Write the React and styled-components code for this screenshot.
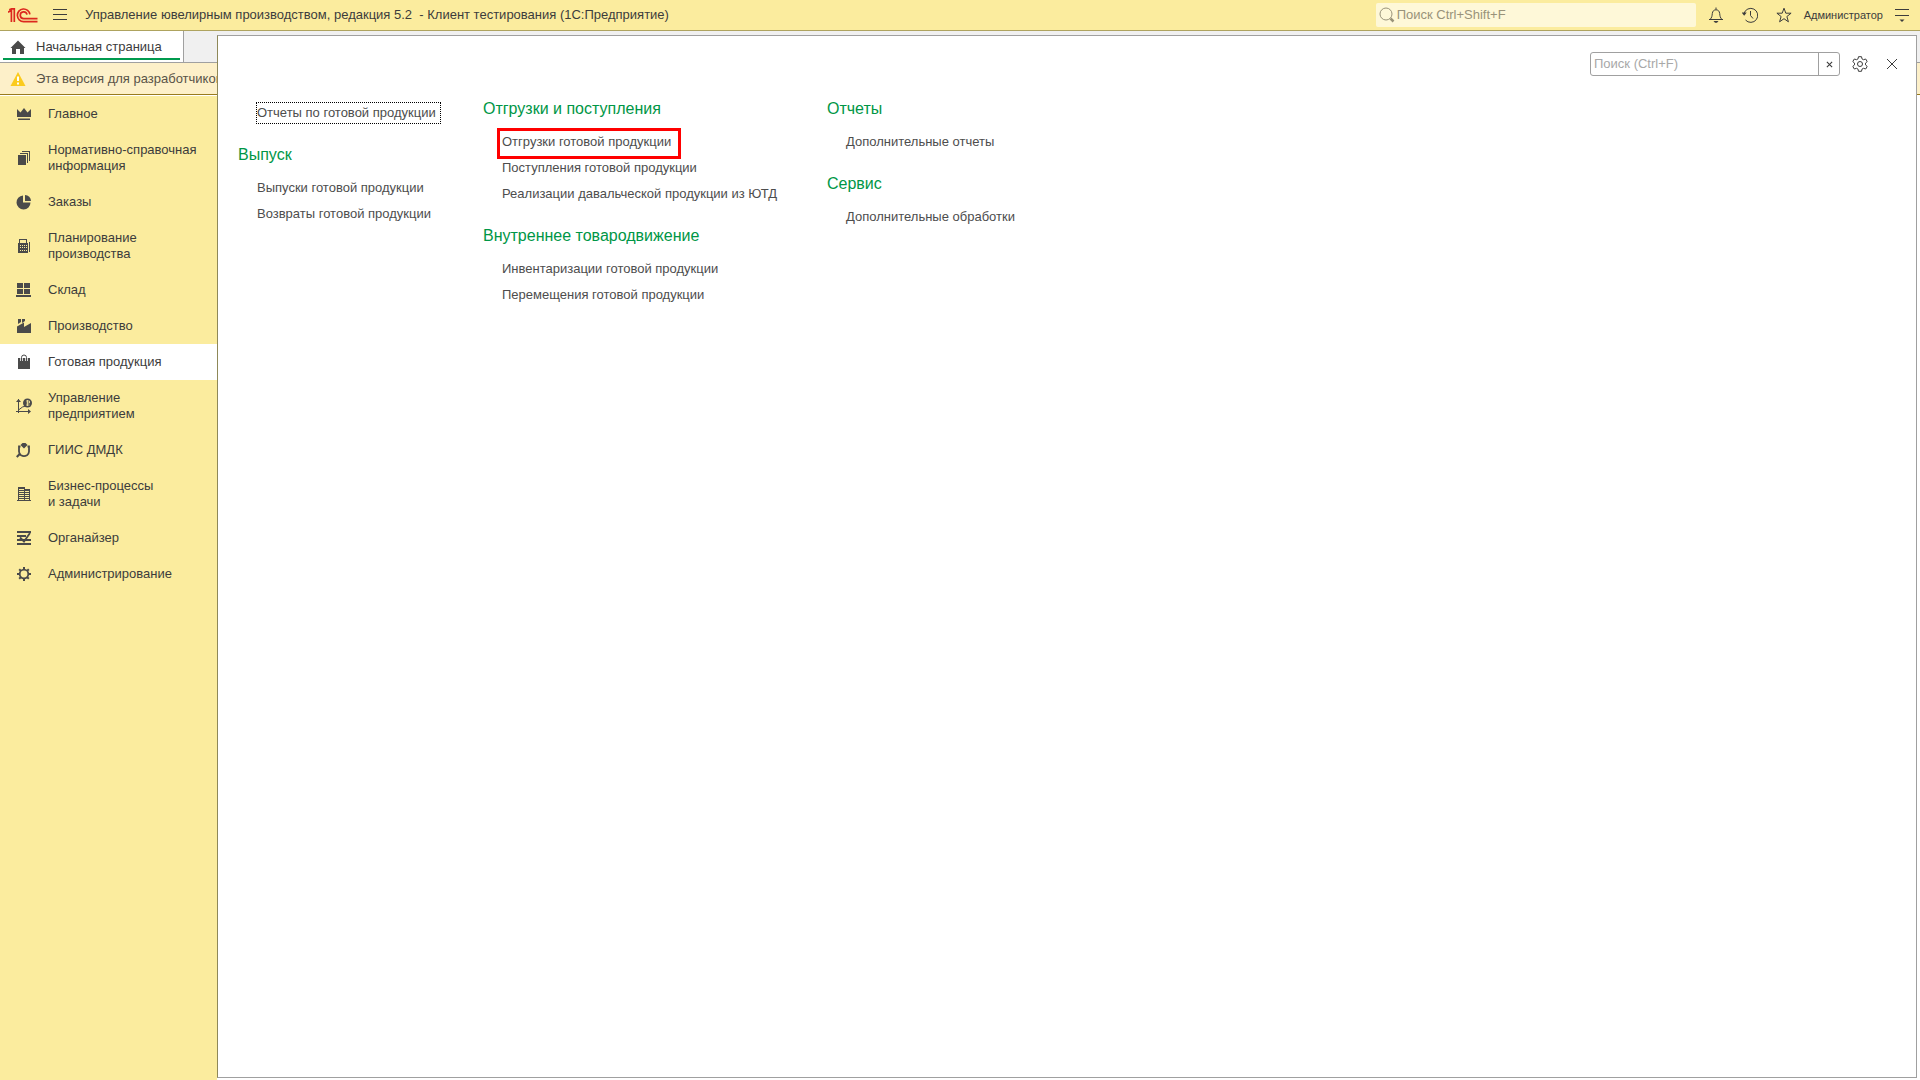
import styled, { createGlobalStyle, css } from 'styled-components';

const GlobalStyle = createGlobalStyle`
    * {
        box-sizing: border-box;
    }

    body {
        margin: 0;
        background: #fff;
        color: #3c3c3c;
        font: 13px/16px "Liberation Sans", Arial, sans-serif;
        overflow: hidden;
    }

    button, input {
        font: inherit;
        color: inherit;
    }

    svg {
        display: block;
        flex: none;
    }
`;

const Page = styled.div`
    display: flex;
    flex-direction: column;
    height: 100vh;
`;

const TopBar = styled.header`
    display: flex;
    align-items: center;
    height: 31px;
    padding: 0 4px 0 8px;
    background: #fbec9e;
    border-bottom: 1px solid #aea35f;
`;

const IconButton = styled.button`
    display: flex;
    align-items: center;
    justify-content: center;
    width: ${({ $width }) => $width || 32}px;
    height: 24px;
    padding: 0;
    border: 0;
    background: none;
    color: #3c3c3c;
`;

const AppTitle = styled.h1`
    flex: 1;
    margin: 0 0 0 3px;
    font-size: 13px;
    font-weight: normal;
    white-space: pre;
`;

const GlobalSearch = styled.label`
    display: flex;
    align-items: center;
    gap: 2px;
    width: 320px;
    height: 24px;
    margin-right: 3px;
    padding-left: 3px;
    border-radius: 2px;
    background: #fef8d8;
    color: #99937a;
`;

const SearchInput = styled.input`
    flex: 1;
    min-width: 0;
    height: 100%;
    padding: 0 0 2px;
    border: 0;
    outline: 0;
    background: none;

    &::placeholder {
        color: ${({ $hint }) => $hint};
        opacity: 1;
    }
`;

const UserButton = styled.button`
    margin: 0 5px 0 3px;
    padding: 0;
    border: 0;
    background: none;
    font-size: 11px;
`;

const Body = styled.div`
    position: relative;
    flex: 1;
    display: flex;
    flex-direction: column;
    min-height: 0;
`;

const TabStrip = styled.nav`
    display: flex;
    height: 32px;
    background: #f0f0f0;
    border-bottom: 1px solid #a0a0a0;
`;

const Tab = styled.a`
    display: flex;
    align-items: center;
    gap: 10px;
    width: 184px;
    padding: 0 10px;
    border-right: 1px solid #a0a0a0;
    background: linear-gradient(#009a4e, #009a4e) 3px 27px / 177px 2px no-repeat #fff;
    color: inherit;
    text-decoration: none;
`;

const Notice = styled.div`
    display: flex;
    align-items: center;
    gap: 10px;
    height: 32px;
    padding: 0 10px;
    background: #fdf0c9;
    border-bottom: 1px solid #997b1d;
    color: #595348;
    white-space: nowrap;
`;

const Sidebar = styled.nav`
    flex: 1;
    width: 217px;
    margin-top: 1px;
    background: #fbec9e;
`;

const SidebarItem = styled.a`
    display: flex;
    align-items: center;
    gap: 16px;
    padding: 10px 0 10px 16px;
    background: ${({ $active }) => ($active ? '#fff' : 'none')};
    color: #3c3c3c;
    text-decoration: none;
    white-space: pre-line;
`;

// Function panel lies over the start page and leaves its edges visible
const Panel = styled.main`
    position: absolute;
    inset: 4px 3px 2px 217px;
    padding: 16px 8px 0 20px;
    border: 1px solid #a0a0a0;
    border-left-color: #8e8858;
    background: #fff;
`;

const PanelTools = styled.div`
    display: flex;
    align-items: center;
    justify-content: flex-end;
    height: 24px;
`;

const PanelSearch = styled.div`
    display: flex;
    width: 250px;
    height: 24px;
    margin-right: 4px;
    padding-left: 3px;
    border: 1px solid #a0a0a0;
    border-radius: 3px;
`;

const ClearButton = styled.button`
    display: flex;
    align-items: center;
    justify-content: center;
    width: 21px;
    padding: 0;
    border: 0;
    border-left: 1px solid #a0a0a0;
    background: none;
`;

const Columns = styled.div`
    display: grid;
    grid-template-columns: 245px 344px auto;
    padding-top: 23px;
`;

const Column = styled.div`
    display: flex;
    flex-direction: column;
    gap: 19px;
`;

const Group = styled.section`
    display: flex;
    flex-direction: column;
    align-items: flex-start;
`;

const GroupTitle = styled.h2`
    margin: 0 0 10px;
    color: #009646;
    font-size: 16px;
    font-weight: normal;
    line-height: 20px;
`;

const Command = styled.a`
    position: relative;
    margin-left: 19px;
    padding: 5px 0;
    color: #4d4d4d;
    text-decoration: none;
    white-space: nowrap;

    ${({ $focused }) => $focused && css`
        margin: 3px 0 2px 18px;
        padding: 2px 4px 2px 0;
        border: 1px dotted #000;
    `}

    ${({ $marked }) => $marked && css`
        &::after {
            content: "";
            position: absolute;
            inset: -1px -10px -4px -5px;
            border: 3px solid #f00;
        }
    `}
`;

const Logo = () => (
    <svg width="30" height="15" viewBox="0 0 30 15" fill="none" stroke="#dc281e" strokeWidth="1.7">
        <path d="M0 4.2 3.4 2.2V14M1.2 1.8 3.6.9H6.3V14" />
        <path d="M21.9 6.4A6.3 6.3 0 1 0 15.600 13.600H29.500" />
        <path d="M19 6.600A3.400 3.400 0 1 0 15.600 10.600H29.500" />
    </svg>
);

const Icon = ({ size = 16, children, ...rest }) => (
    <svg width={size} height={size} viewBox="0 0 16 16" fill="#4a4a4a" {...rest}>{children}</svg>
);

const lineProps = { fill: 'none', stroke: '#3c3c3c' };

const sections = [
    {
        title: 'Главное',
        icon: <path d="M1 3l3.500 3.500L8 2l3.500 4.500L15 3v8H1zM2 12.500h12V14H2z" />,
    },
    {
        title: 'Нормативно-справочная\nинформация',
        icon: <path d="M2 5h8v10H2zM4 3h8v10h-1V4H4zM6 1h8v10h-1V2H6z" />,
    },
    {
        title: 'Заказы',
        icon: <path d="M7 1.500V8.500h7.500A7 7 0 1 1 7 1.500zM9 1a6 6 0 0 1 6 6H9z" />,
    },
    {
        title: 'Планирование\nпроизводства',
        icon: (
            <path
                fillRule="evenodd"
                d="M3 1h8v4h1v10H2V5h1zM4 2v3h6V2zM4 7v1h1V7zM6 7v1h1V7zM8 7v1h1V7zM10 7v1h1V7zM4 9v1h1V9zM6 9v1h1V9zM8 9v1h1V9zM10 9v1h1V9zM4 12v1h1v-1zM6 12v1h1v-1zM8 12v1h1v-1zM10 12v1h1v-1zM13 4h1v10h-1z"
            />
        ),
    },
    {
        title: 'Склад',
        icon: <path d="M1 1h6v5H1zM8 1h6v5H8zM1 7h6v5H1zM8 7h6v5H8zM0 13h15v2H0z" />,
    },
    {
        title: 'Производство',
        icon: <path d="M2 1h3v3L2 6zM6 1h3v2L6 5zM1 8.500l7-4V9l7-4v10H1z" />,
    },
    {
        title: 'Готовая продукция',
        active: true,
        icon: (
            <>
                <path d="M2 4h12v11H2z" />
                <path d="M5.500 7V4a2.500 2.500 0 0 1 5 0v3" fill="none" stroke="#fff" strokeWidth="2.500" />
                <path d="M5.500 7V3.500a2.500 2.500 0 0 1 5 0V7" fill="none" stroke="#4a4a4a" />
            </>
        ),
    },
    {
        title: 'Управление\nпредприятием',
        icon: (
            <>
                <path d="M2.500 1v14M0 13.500h14M2.500 12l4-3 3-1" fill="none" stroke="#4a4a4a" />
                <path d="M0 4l2.500-3L5 4zM12 11l3 2.500-3 2.500z" />
                <circle cx="11.500" cy="5" r="4.500" />
                <path d="M10 3h3.500v2H10.500M10 7h3.500M11.500 2v6" fill="none" stroke="#fbec9e" strokeWidth=".8" />
            </>
        ),
    },
    {
        title: 'ГИИС ДМДК',
        icon: (
            <>
                <path d="M6.500 1h3l2 2L8 6.500 4.500 3zM0 14.200l3.500-3.500 1.500 1.500-3.500 3.500z" />
                <path d="M4.500 4.500H3V9.500a5 5 0 0 0 2 3.800Q8 15 11 13.300a5 5 0 0 0 2-3.800V4.500h-1.500" fill="none" stroke="#4a4a4a" strokeWidth="1.800" />
            </>
        ),
    },
    {
        title: 'Бизнес-процессы\nи задачи',
        icon: (
            <path
                fillRule="evenodd"
                d="M2 1h7v2h5v11h1v1H1v-1h1zM3 3v1h5V3zM3 5v1h5V5zM3 7v1h5V7zM3 9v1h5V9zM3 11v1h5v-1zM3 13v1h5v-1zM9 5v1h4V5zM9 7v1h4V7zM9 9v1h4V9zM9 11v1h4v-1zM9 13v1h4v-1z"
            />
        ),
    },
    {
        title: 'Органайзер',
        icon: (
            <>
                <path d="M1 1h14v2H1zM1 5h9v2H1zM1 9h14v2H1zM1 13h14v2H1z" />
                <path d="M4 7.500l4 4L14 3" fill="none" stroke="#4a4a4a" strokeWidth="1.800" />
            </>
        ),
    },
    {
        title: 'Администрирование',
        icon: (
            <g fill="none" stroke="#4a4a4a">
                <circle cx="8" cy="8" r="4.300" strokeWidth="1.800" />
                <path
                    d="M8 1v2.500M8 12.500V15M1 8h2.500M12.500 8H15M3.200 3.200l1.700 1.700M11.100 11.100l1.700 1.700M12.800 3.200l-1.700 1.700M3.200 12.800l1.700-1.700"
                    strokeWidth="2"
                />
            </g>
        ),
    },
];

const columns = [
    [
        { commands: [{ label: 'Отчеты по готовой продукции', focused: true }] },
        {
            title: 'Выпуск',
            commands: [{ label: 'Выпуски готовой продукции' }, { label: 'Возвраты готовой продукции' }],
        },
    ],
    [
        {
            title: 'Отгрузки и поступления',
            commands: [
                { label: 'Отгрузки готовой продукции', marked: true },
                { label: 'Поступления готовой продукции' },
                { label: 'Реализации давальческой продукции из ЮТД' },
            ],
        },
        {
            title: 'Внутреннее товародвижение',
            commands: [{ label: 'Инвентаризации готовой продукции' }, { label: 'Перемещения готовой продукции' }],
        },
    ],
    [
        { title: 'Отчеты', commands: [{ label: 'Дополнительные отчеты' }] },
        { title: 'Сервис', commands: [{ label: 'Дополнительные обработки' }] },
    ],
];

const Header = () => (
    <TopBar>
        <Logo />
        <IconButton $width={44} aria-label="Меню">
            <Icon {...lineProps}><path d="M1 2.500h14M1 7.500h14M1 12.500h14" /></Icon>
        </IconButton>
        <AppTitle>Управление ювелирным производством, редакция 5.2  - Клиент тестирования (1С:Предприятие)</AppTitle>
        <GlobalSearch>
            <Icon fill="none" stroke="#99937a">
                <circle cx="7" cy="7" r="6" />
                <path d="M11.500 11.500l3 3" strokeWidth="2.500" />
            </Icon>
            <SearchInput $hint="#99937a" placeholder="Поиск Ctrl+Shift+F" aria-label="Поиск" />
        </GlobalSearch>
        <IconButton $width={34} aria-label="Уведомления">
            <Icon {...lineProps}>
                <path d="M1 12.500h14M2 12.500c2-2 2-3.500 2.300-6C4.600 4 6 2.800 8 2.800s3.400 1.200 3.700 3.700c.300 2.500.3 4 2.300 6M8 .5v2" />
                <path d="M5.500 14h5L9 15.800H7z" fill="#3c3c3c" stroke="none" />
            </Icon>
        </IconButton>
        <IconButton $width={34} aria-label="История">
            <Icon {...lineProps}>
                <path d="M2 6.500A7 7 0 1 1 3.500 13M8.500 4v4.500l2.500 3" />
                <path d="M-.3 5.500h5L2.200 8.800z" fill="#3c3c3c" stroke="none" />
            </Icon>
        </IconButton>
        <IconButton $width={34} aria-label="Избранное">
            <Icon {...lineProps}>
                <path d="M8 1.200l1.800 5h5.300l-4.200 3.300 1.500 5.300L8 11.700l-4.400 3.100 1.500-5.300L.9 6.200h5.300z" />
            </Icon>
        </IconButton>
        <UserButton>Администратор</UserButton>
        <IconButton $width={28} aria-label="Сервис и настройки">
            <Icon {...lineProps}>
                <path d="M1 2.500h14M1 8.500h14" />
                <path d="M5.500 12.500h5L8 15z" fill="#3c3c3c" stroke="none" />
            </Icon>
        </IconButton>
    </TopBar>
);

const FunctionPanel = () => (
    <Panel>
        <PanelTools>
            <PanelSearch>
                <SearchInput $hint="#a8a8a8" placeholder="Поиск (Ctrl+F)" aria-label="Поиск по командам" />
                <ClearButton aria-label="Очистить">
                    <Icon size={7} {...lineProps} strokeWidth="2.500"><path d="M2 2l12 12M14 2L2 14" /></Icon>
                </ClearButton>
            </PanelSearch>
            <IconButton aria-label="Настройка">
                <Icon {...lineProps}>
                    <path d="M6.500.7h3l.5 2.200 1.500.8 2.200-.7 1.500 2.600-1.700 1.500v1.800l1.700 1.500-1.500 2.600-2.200-.7-1.500.8-.5 2.200h-3L6 13.100l-1.500-.8-2.200.7L.8 10.400l1.700-1.500V7.100L.8 5.600 2.300 3l2.200.7L6 2.900z" />
                    <circle cx="8" cy="8" r="2.500" />
                </Icon>
            </IconButton>
            <IconButton aria-label="Закрыть">
                <Icon {...lineProps}><path d="M3 3l10 10M13 3L3 13" /></Icon>
            </IconButton>
        </PanelTools>
        <Columns>
            {columns.map((groups, i) => (
                <Column key={i}>
                    {groups.map(({ title, commands }, j) => (
                        <Group key={j}>
                            {title && <GroupTitle>{title}</GroupTitle>}
                            {commands.map(({ label, focused, marked }) => (
                                <Command href="#" key={label} $focused={focused} $marked={marked}>{label}</Command>
                            ))}
                        </Group>
                    ))}
                </Column>
            ))}
        </Columns>
    </Panel>
);

const App = () => (
    <Page>
        <GlobalStyle />
        <Header />
        <Body>
            <TabStrip>
                <Tab href="#">
                    <Icon><path d="M8 1.500L15.500 9H14v6h-4v-5H6v5H2V9H.5z" /></Icon>
                    Начальная страница
                </Tab>
            </TabStrip>
            <Notice>
                <Icon>
                    <path d="M8 1l7.500 14H.5z" fill="#fbcb1e" />
                    <path d="M7 5.500h2V10H7zM7 11.500h2v2H7z" fill="#fff" />
                </Icon>
                Эта версия для разработчиков
            </Notice>
            <Sidebar>
                {sections.map(({ title, icon, active }) => (
                    <SidebarItem href="#" key={title} $active={active}>
                        <Icon>{icon}</Icon>
                        {title}
                    </SidebarItem>
                ))}
            </Sidebar>
            <FunctionPanel />
        </Body>
    </Page>
);

export default App;
